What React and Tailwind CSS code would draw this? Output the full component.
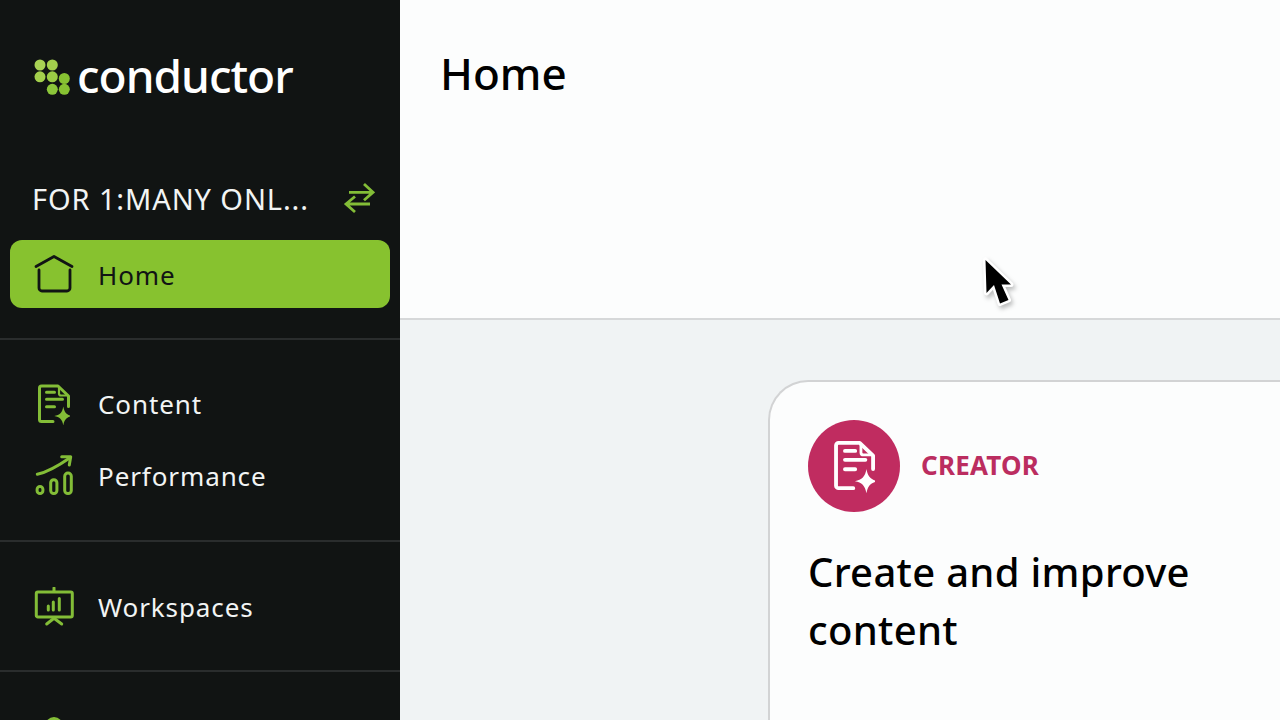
import React from 'react';

const LogoDots = () => (
  <svg width="36" height="36" viewBox="0 0 36 36" className="shrink-0">
    <circle cx="6" cy="6" r="5.5" fill="#a9d254" />
    <circle cx="18.300" cy="6" r="5.500" fill="#a3cf4c" />
    <circle cx="6" cy="17.800" r="5.500" fill="#a3cf4c" />
    <circle cx="18.300" cy="17.800" r="5.500" fill="#9bcb45" />
    <circle cx="30.300" cy="19.500" r="5.500" fill="#87c232" />
    <circle cx="18.300" cy="30.300" r="5.500" fill="#8cc63a" />
    <circle cx="30.300" cy="30.300" r="5.500" fill="#87c232" />
  </svg>
);

const SwapIcon = () => (
  <svg width="32" height="34" viewBox="0 0 32 34" fill="none" stroke="#83bd37" strokeWidth="2.800" className="shrink-0">
    <path d="M6 12.300h24M21 4l9 8.300-9 8" />
    <path d="M27 24H3M12 16.500L3 24l9 8" />
  </svg>
);

const HomeIcon = () => (
  <svg width="42" height="40" viewBox="0 0 42 40" fill="none" stroke="#111414" strokeWidth="2.800" strokeLinecap="round" strokeLinejoin="round">
    <path d="M2 12.500L20 2.500l18 10" />
    <path d="M5 16v18a3 3 0 0 0 3 3h25a3 3 0 0 0 3-3V16" />
  </svg>
);

// doc with sparkle, shared by the nav and the creator badge
const DocIcon = ({ color, size = 36, width = 3 }) => (
  <svg width={size} height={size * 42 / 36} viewBox="0 0 36 42" fill="none" stroke={color} strokeWidth={width} strokeLinecap="round" strokeLinejoin="round">
    <path d="M19 38.500H7.500a2 2 0 0 1-2-2V5a2 2 0 0 1 2-2H24l10.500 10v10.500" />
    <path d="M25 4.500v6a2 2 0 0 0 2 2h6" strokeWidth={width - 0.800} />
    <path d="M12.500 9.300h8M12.500 16.300h16M12.500 23.700h8" />
    <path d="M29.300 23.500c1 6 3.500 8.500 9 9.500-5.500 1-8 3.500-9 9.500-1-6-3.500-8.500-9-9.500 5.500-1 8-3.500 9-9.500z" fill={color} stroke="none" />
  </svg>
);

const PerfIcon = () => (
  <svg width="40" height="42" viewBox="0 0 40 42" fill="none" stroke="#83bd37" strokeWidth="3" strokeLinecap="round" strokeLinejoin="round">
    <path d="M3.300 19.300C14 17 24 11 36 2.700" />
    <path d="M27.700 1.700h9L35.300 10" />
    <rect x="3.100" y="31.400" width="5.800" height="7.200" rx="2.900" />
    <rect x="16.700" y="24.700" width="6.200" height="13.900" rx="3" />
    <rect x="30.700" y="18.100" width="6.600" height="20.500" rx="3.200" />
  </svg>
);

const WorkspaceIcon = () => (
  <svg width="40" height="40" viewBox="0 0 40 40" fill="none" stroke="#83bd37" strokeWidth="3" strokeLinecap="round" strokeLinejoin="round">
    <path d="M20 1v3" />
    <rect x="2.300" y="5" width="36" height="25" rx="1.500" />
    <path d="M12.700 37l7.300-5.700 7.700 5.700" />
    <path d="M14.300 23v-4M19.300 23v-8M25.300 23V11.500" />
  </svg>
);

const Cursor = () => (
  <svg width="36" height="56" viewBox="0 0 36 56" className="absolute left-[982px] top-[255px] drop-shadow-[2px_3px_2px_rgba(0,0,0,0.25)]">
    <path d="M3.500 5l1 33 7.500-8 6 18.500 8.500-3.500-7-15.500H29z" fill="#000" stroke="#fff" strokeWidth="5" strokeLinejoin="round" paintOrder="stroke" />
  </svg>
);

const NavItem = ({ icon, label, className = '' }) => (
  <div className={`flex items-center pl-[34px] ${className}`}>
    <div className="flex w-[64px] shrink-0 items-center">{icon}</div>
    <span className="text-[26px] leading-none tracking-[0.900px] text-[#f2f4f4]">{label}</span>
  </div>
);

export default function App() {
  return (
    <div className="relative flex h-[720px] w-[1280px] overflow-hidden font-['Noto_Sans',sans-serif]">
      <aside className="flex h-full w-[400px] shrink-0 flex-col overflow-hidden bg-[#111413]">
        <div className="flex h-[154px] shrink-0 items-center gap-[7px] pl-[34px]">
          <LogoDots />
          <span className="pb-[4px] text-[46px] font-medium leading-none tracking-[-1px] text-white">conductor</span>
        </div>
        <div className="flex h-[86px] shrink-0 items-start justify-between pl-[32px] pr-[25px] pt-[25px]">
          <span className="text-[29px] leading-[40px] tracking-[0.900px] text-[#f2f4f4]">FOR 1:MANY ONL...</span>
          <div className="pt-[1px]"><SwapIcon /></div>
        </div>
        <div className="mx-[10px] flex h-[68px] shrink-0 items-center rounded-[12px] bg-[#87c22f] pl-[24px]">
          <div className="flex w-[64px] shrink-0 items-center"><HomeIcon /></div>
          <span className="pt-[2px] text-[26px] leading-none tracking-[0.900px] text-[#111414]">Home</span>
        </div>

        <div className="mt-[30px] shrink-0 border-t-2 border-[#2a2d2d] pt-[28px]">
          <NavItem label="Content" icon={<DocIcon color="#83bd37" />} className="h-[72px]" />
          <NavItem label="Performance" icon={<PerfIcon />} className="h-[72px]" />
        </div>
        <div className="mt-[28px] flex h-[132px] shrink-0 items-center border-y-2 border-[#2a2d2d] pt-[2px]">
          <NavItem label="Workspaces" icon={<WorkspaceIcon />} />
        </div>
        <div className="mt-[45px] shrink-0 pl-[45px]">
          <div className="h-[20px] w-[18px] rounded-full border-[3px] border-[#83bd37]" />
        </div>
      </aside>

      <main className="flex min-w-0 flex-1 flex-col bg-[#f0f3f4]">
        <header className="h-[320px] shrink-0 border-b-2 border-[#d6d8d9] bg-[#fcfdfd] pl-[40px] pt-[45px]">
          <h1 className="text-[44px] font-medium leading-[56px] text-black">Home</h1>
        </header>
        <div className="ml-[368px] mt-[60px] h-[500px] w-[640px] shrink-0 rounded-tl-[40px] border-l-2 border-t-2 border-[#d2d3d4] bg-[#fcfdfd] pl-[38px] pt-[38px]">
          <div className="flex items-center gap-[21px]">
            <div className="flex h-[92px] w-[92px] items-center justify-center rounded-full bg-[#c02c60] pr-[4px]">
              <DocIcon color="#ffffff" size={46} width={3} />
            </div>
            <span className="pb-[2px] text-[26px] font-bold tracking-[0.200px] text-[#bb2d60]">CREATOR</span>
          </div>
          <h2 className="mt-[31px] w-[420px] text-[40px] font-medium leading-[58px] tracking-[0.300px] text-black">Create and improve content</h2>
        </div>
      </main>

      <Cursor />
    </div>
  );
}
